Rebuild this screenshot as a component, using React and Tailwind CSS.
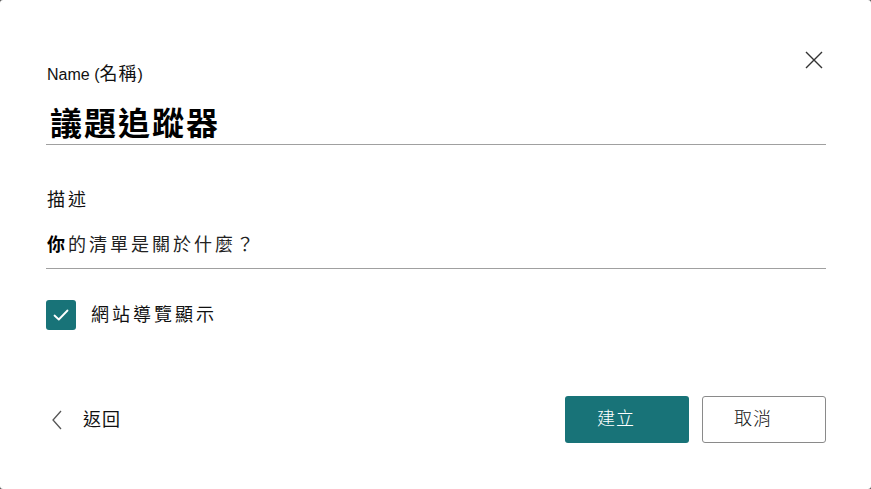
import React from 'react';

const CloseIcon = () => (
    <svg width="18" height="18" viewBox="0 0 18 18" fill="none" stroke="#333" strokeWidth="1.4">
        <path d="M1 1 L17 17 M17 1 L1 17" />
    </svg>
);

const ChevronLeft = () => (
    <svg width="12" height="20" viewBox="0 0 12 20" fill="none" stroke="#555" strokeWidth="1.3">
        <path d="M10 1 L2 10 L10 19" />
    </svg>
);

const CheckIcon = () => (
    <svg width="16" height="12" viewBox="0 0 16 12" fill="none" stroke="#fff" strokeWidth="1.8" strokeLinecap="round" strokeLinejoin="round">
        <path d="M1.5 6.5 L5.8 10.5 L14.5 1.5" />
    </svg>
);

const cjk = "font-['Liberation_Sans','Noto_Sans_CJK_TC',sans-serif]";

export default function App() {
    return (
        <div className="w-[871px] h-[489px] bg-[#555]">
            <div className={`w-full h-full bg-white rounded-[3px] relative flex flex-col pl-[46px] pr-[45px] text-black ${cjk}`}>
                {/* Close button */}
                <button className="absolute top-[51px] right-[48px] p-0 bg-transparent">
                    <CloseIcon />
                </button>

                {/* Name field */}
                <div className="mt-[65px] h-[20px] text-[16px] leading-[20px] pl-[1px] text-[#111]">
                    Name (<span className="text-[18px] leading-[18px] tracking-[1px]">名稱</span>)
                </div>
                <div className="mt-[19px] border-b border-[#a0a0a0] h-[41px] pl-[4px] text-[32px] leading-[40px] font-bold tracking-[2px]">
                    議題追蹤器
                </div>

                {/* Description */}
                <div className="mt-[42px] text-[18px] leading-[26px] pl-[1px] tracking-[3px] text-[#111]">描述</div>
                <div className="mt-[19px] border-b border-[#a0a0a0] pb-[10px] text-[18px] leading-[26px] pl-[1px] tracking-[3px] text-[#222]">
                    <span className="font-bold text-black">你</span>的清單是關於什麼？
                </div>

                {/* Checkbox */}
                <label className="mt-[31px] flex items-center gap-[15px]">
                    <span className="w-[30px] h-[30px] rounded-[3px] bg-[#187378] flex items-center justify-center">
                        <CheckIcon />
                    </span>
                    <span className="text-[18px] leading-[26px] tracking-[3px] text-[#111]">網站導覽顯示</span>
                </label>

                {/* Footer */}
                <div className="mt-[66px] flex items-center">
                    <button className="flex items-center gap-[20px] pl-[5px] bg-transparent">
                        <ChevronLeft />
                        <span className="text-[18px] leading-[26px] text-[#111] tracking-[1px]">返回</span>
                    </button>
                    <div className="ml-auto flex gap-[13px]">
                        <button className="w-[124px] h-[47px] rounded-[3px] bg-[#187378] text-white text-[18px] font-light tracking-[1px] pr-[22px]">建立</button>
                        <button className="w-[124px] h-[47px] rounded-[3px] bg-white border border-[#8a8a8a] text-[#111] text-[18px] font-light tracking-[1px] pr-[22px]">取消</button>
                    </div>
                </div>
            </div>
        </div>
    );
}
